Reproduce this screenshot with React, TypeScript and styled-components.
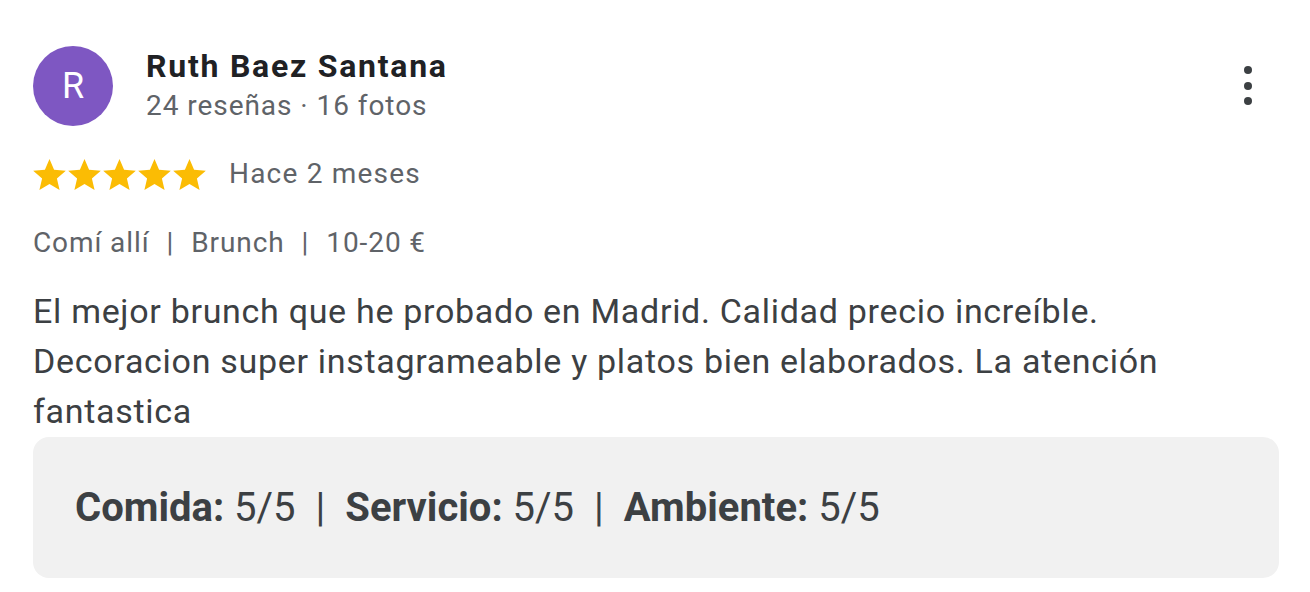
import React from "react";
import styled, { createGlobalStyle } from "styled-components";

const Global = createGlobalStyle`
  html, body { margin: 0; padding: 0; background: #ffffff; }
  body { font-family: Roboto, "Noto Sans", Arial, sans-serif; -webkit-font-smoothing: antialiased; }
`;

const Card = styled.div`
  width: 1310px;
  box-sizing: border-box;
  padding: 46px 31px 0 33px;
  display: flex;
  flex-direction: column;
`;

const Header = styled.div`
  display: flex;
  align-items: center;
  gap: 33px;
`;

const Avatar = styled.div`
  width: 80px;
  height: 80px;
  border-radius: 50%;
  background: #7e57c2;
  color: #fff;
  display: flex;
  align-items: center;
  justify-content: center;
  font-size: 36px;
  font-weight: 400;
  flex-shrink: 0;
`;

const Who = styled.div`
  display: flex;
  flex-direction: column;
  flex: 1;
`;

const Name = styled.div`
  font-size: 32px;
  font-weight: 700;
  color: #202124;
  line-height: 40px;
  letter-spacing: 1.75px;
`;

const Sub = styled.div`
  font-size: 28px;
  color: #5f6368;
  line-height: 40px;
  letter-spacing: 0.95px;
`;

const Kebab = styled.div`
  display: flex;
  flex-direction: column;
  gap: 7.5px;
  align-self: flex-start;
  margin-top: 20px;
  margin-right: 27px;
`;

const Dot = styled.span`
  width: 8px;
  height: 8px;
  border-radius: 50%;
  background: #3c4043;
`;

const RatingRow = styled.div`
  display: flex;
  align-items: center;
  gap: 23px;
  margin-top: 30px;
  height: 36px;
`;

const Stars = styled.div`
  display: flex;
  gap: 2px;
`;

const Meta = styled.div`
  font-size: 28px;
  color: #5f6368;
  line-height: 36px;
  letter-spacing: 1.2px;
`;

const Tags = styled.div`
  margin-top: 33px;
  font-size: 28px;
  color: #5f6368;
  line-height: 36px;
  letter-spacing: 0.9px;
  display: flex;
  gap: 17px;
`;

const Body = styled.p`
  margin: 25px 0 0;
  font-size: 34px;
  line-height: 50px;
  letter-spacing: 0.7px;
  color: #3c4043;
`;

const Aspects = styled.div`
  margin-top: 1px;
  background: #f1f1f1;
  border-radius: 16px;
  height: 141px;
  display: flex;
  align-items: center;
  padding-left: 42px;
  font-size: 40px;
  color: #3c4043;
  gap: 20px;
`;

const Label = styled.b`
  font-weight: 700;
`;

const Star = () => (
  <svg width="33" height="31" viewBox="2 2 20 19">
    <path
      fill="#fbbc04"
      d="M12 17.27L18.18 21l-1.64-7.03L22 9.24l-7.19-.61L12 2 9.19 8.63 2 9.24l5.46 4.73L5.82 21z"
    />
  </svg>
);

export default function App() {
  return (
    <>
      <Global />
      <Card>
        <Header>
          <Avatar>R</Avatar>
          <Who>
            <Name>Ruth Baez Santana</Name>
            <Sub>24 reseñas · 16 fotos</Sub>
          </Who>
          <Kebab>
            <Dot />
            <Dot />
            <Dot />
          </Kebab>
        </Header>
        <RatingRow>
          <Stars>
            {[0, 1, 2, 3, 4].map((i) => (
              <Star key={i} />
            ))}
          </Stars>
          <Meta>Hace 2 meses</Meta>
        </RatingRow>
        <Tags>
          <span>Comí allí</span>
          <span>|</span>
          <span>Brunch</span>
          <span>|</span>
          <span>10-20 €</span>
        </Tags>
        <Body>
          El mejor brunch que he probado en Madrid. Calidad precio increíble.
          <br />
          Decoracion super instagrameable y platos bien elaborados. La atención
          <br />
          fantastica
        </Body>
        <Aspects>
          <span>
            <Label>Comida:</Label> 5/5
          </span>
          <span>|</span>
          <span>
            <Label>Servicio:</Label> 5/5
          </span>
          <span>|</span>
          <span>
            <Label>Ambiente:</Label> 5/5
          </span>
        </Aspects>
      </Card>
    </>
  );
}
